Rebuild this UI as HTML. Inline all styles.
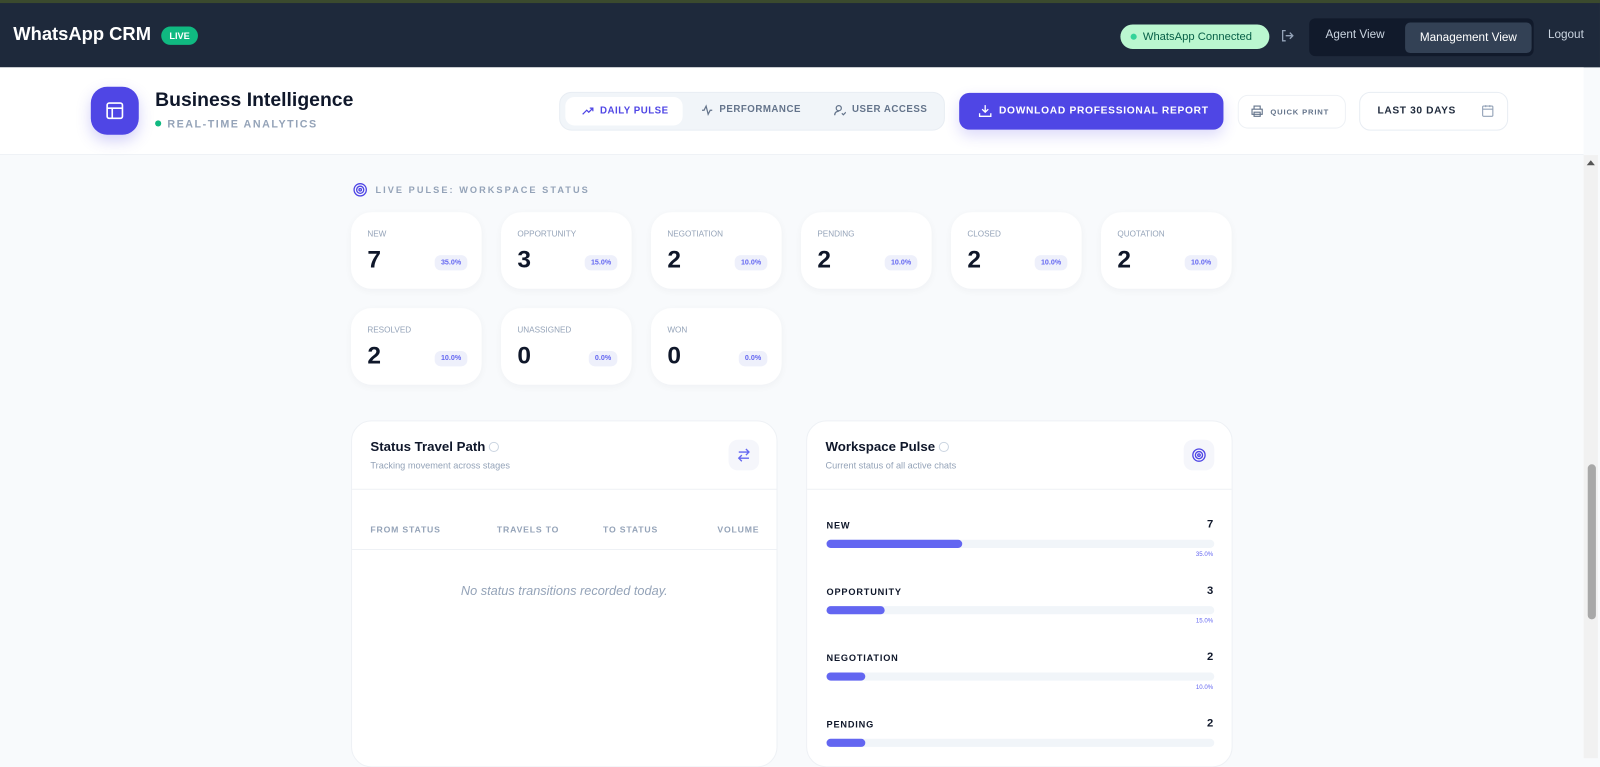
<!DOCTYPE html>
<html><head><style>
*{box-sizing:border-box;margin:0;padding:0}
body{width:1600px;height:743px;overflow:hidden;background:#f8fafc;font-family:"Liberation Sans",sans-serif;position:relative;color:#0f172a}
#w{position:absolute;left:0;top:0;width:1568px;height:728px;transform:scale(1.0204);transform-origin:0 0}
.abs{position:absolute}
.top{left:0;top:0;width:1568px;height:66px;background:#1e293b;border-top:3px solid #3b4a2e}
.hdr{left:0;top:66px;width:1552px;height:86px;background:#fff;border-bottom:1px solid #eef1f5}
.card{position:absolute;width:128px;height:75px;background:#fff;border-radius:20px;box-shadow:0 2px 8px rgba(15,23,42,.04)}
.card .l{position:absolute;left:16px;top:17px;font-size:8px;color:#94a3b8}
.card .n{position:absolute;left:16px;top:33px;font-size:24px;font-weight:bold}
.card .p{position:absolute;right:14px;top:42px;font-size:7px;color:#6366f1;background:#eef0fb;border-radius:6px;padding:4px 6px;font-weight:bold}
.panel{position:absolute;top:412px;width:418px;height:340px;background:#fff;border-radius:20px;border:1px solid #eef1f5}
.ptitle{position:absolute;left:18px;top:17px;font-size:13px;font-weight:bold}
.psub{position:absolute;left:18px;top:38px;font-size:9px;color:#94a3b8}
.th{position:absolute;top:101px;font-size:8.5px;font-weight:bold;color:#94a3b8;letter-spacing:.8px}
.bl{position:absolute;left:19px;font-size:9px;font-weight:bold;letter-spacing:.8px}
.bv{position:absolute;right:18px;font-size:11px;font-weight:bold}
.bar{position:absolute;left:19px;width:380px;height:8px;background:#f1f5f9;border-radius:4px}
.bar i{display:block;height:8px;background:#6366f1;border-radius:4px}
.bp{position:absolute;right:18px;font-size:6px;color:#6366f1}
</style></head><body><div id="w">
<div class="abs top">
 <div class="abs" style="left:13px;top:20px;color:#fff;font-size:18px;font-weight:bold">WhatsApp CRM</div>
 <div class="abs" style="left:158px;top:23px;background:#10b981;color:#fff;font-size:9px;font-weight:bold;border-radius:9px;padding:4px 8px">LIVE</div>
 <div class="abs" style="left:1098px;top:21px;width:146px;height:24px;background:#bbf7d0;border-radius:12px;color:#065f46;font-size:11px;line-height:24px;padding-left:22px">WhatsApp Connected<span class="abs" style="left:10px;top:9px;width:6px;height:6px;border-radius:50%;background:#34d399"></span></div>
 <svg class="abs" style="left:1254px;top:25px" width="14" height="14" viewBox="0 0 14 14" fill="none" stroke="#94a3b8" stroke-width="1.3"><path d="M6 2H3v10h3M6 7h7M10 4l3 3-3 3"/></svg>
 <div class="abs" style="left:1283px;top:15px;width:220px;height:37px;background:#111a2b;border-radius:6px"></div>
 <div class="abs" style="left:1299px;top:25px;color:#cbd5e1;font-size:11.5px">Agent View</div>
 <div class="abs" style="left:1377px;top:19px;width:124px;height:30px;background:#334155;border-radius:5px;color:#fff;font-size:11.5px;line-height:30px;text-align:center">Management View</div>
 <div class="abs" style="left:1517px;top:25px;color:#cbd5e1;font-size:11.5px">Logout</div>
</div>
<div class="abs hdr">
 <div class="abs" style="left:89px;top:19px;width:47px;height:47px;border-radius:16px;background:#4f46e5;box-shadow:0 6px 14px rgba(79,70,229,.25)"><svg class="abs" style="left:14px;top:14px" width="19" height="19" viewBox="0 0 19 19" fill="none" stroke="#fff" stroke-width="1.6"><rect x="2" y="2" width="15" height="15" rx="2"/><path d="M2 7h15M7 7v10"/></svg></div>
 <div class="abs" style="left:152px;top:22px;font-size:19px;font-weight:bold">Business Intelligence</div>
 <div class="abs" style="left:152px;top:50px;font-size:10.5px;color:#94a3b8;letter-spacing:1.5px;font-weight:bold"><span style="display:inline-block;width:6px;height:6px;border-radius:50%;background:#10b981;margin-right:6px;vertical-align:1px"></span>REAL-TIME ANALYTICS</div>
 <div class="abs" style="left:548px;top:24px;width:378px;height:38px;background:#f1f5f9;border-radius:12px;border:1px solid #e8edf3"></div>
 <div class="abs" style="left:554px;top:29px;width:115px;height:28px;background:#fff;border-radius:9px;color:#4f46e5;font-size:9.5px;font-weight:bold;line-height:28px;padding-left:34px;letter-spacing:.5px">DAILY PULSE</div>
 <svg class="abs" style="left:570px;top:38px" width="12" height="10" viewBox="0 0 12 10" fill="none" stroke="#4f46e5" stroke-width="1.2"><path d="M1 8l4-4 2 2 4-4M8 2h3v3"/></svg>
 <svg class="abs" style="left:687px;top:36px" width="12" height="12" viewBox="0 0 12 12" fill="none" stroke="#64748b" stroke-width="1.2"><path d="M1 6h2l2-4 2 8 2-4h2"/></svg>
 <div class="abs" style="left:705px;top:36px;font-size:9.5px;font-weight:bold;color:#64748b;letter-spacing:.5px">PERFORMANCE</div>
 <svg class="abs" style="left:817px;top:36px" width="12" height="12" viewBox="0 0 12 12" fill="none" stroke="#64748b" stroke-width="1.2"><circle cx="5" cy="4" r="2.5"/><path d="M1 11c0-3 2-4 4-4M8 9l1.5 1.5L12 8"/></svg>
 <div class="abs" style="left:835px;top:36px;font-size:9.5px;font-weight:bold;color:#64748b;letter-spacing:.5px">USER ACCESS</div>
 <div class="abs" style="left:940px;top:25px;width:259px;height:36px;background:#4f46e5;border-radius:10px;color:#fff;font-size:10px;font-weight:bold;line-height:36px;padding-left:39px;letter-spacing:.7px;box-shadow:0 6px 14px rgba(79,70,229,.2)">DOWNLOAD PROFESSIONAL REPORT</div>
 <svg class="abs" style="left:959px;top:36px" width="13" height="13" viewBox="0 0 13 13" fill="none" stroke="#fff" stroke-width="1.3"><path d="M6.5 1v7M3.5 5l3 3 3-3M1 9v3h11V9"/></svg>
 <div class="abs" style="left:1213px;top:27px;width:106px;height:33px;background:#fff;border:1px solid #eef1f5;border-radius:10px;font-size:7.5px;font-weight:bold;color:#64748b;line-height:31px;padding-left:31px;letter-spacing:.8px">QUICK PRINT</div>
 <svg class="abs" style="left:1226px;top:37px" width="12" height="12" viewBox="0 0 12 12" fill="none" stroke="#64748b" stroke-width="1.1"><path d="M3 4V1h6v3M1 4h10v5H1zM3 7h6v4H3z"/></svg>
 <div class="abs" style="left:1332px;top:24px;width:146px;height:38px;background:#fff;border:1px solid #e8edf3;border-radius:11px;font-size:10px;font-weight:bold;color:#1e293b;line-height:36px;padding-left:17px;letter-spacing:.6px">LAST 30 DAYS</div>
 <svg class="abs" style="left:1452px;top:36px" width="12" height="13" viewBox="0 0 12 13" fill="none" stroke="#94a3b8" stroke-width="1.1"><rect x="1" y="2" width="10" height="10" rx="1"/><path d="M1 5h10M4 1v2M8 1v2"/></svg>
</div>
<div class="abs" style="left:1552px;top:152px;width:14px;height:591px;background:#f1f1f1"></div>
<div class="abs" style="left:1555px;top:157px;width:0;height:0;border-left:4px solid transparent;border-right:4px solid transparent;border-bottom:5px solid #555"></div>
<div class="abs" style="left:1556px;top:455px;width:8px;height:152px;background:#a8a8a8;border-radius:4px"></div>
<svg class="abs" style="left:346px;top:179px" width="14" height="14" viewBox="0 0 14 14" fill="none" stroke="#4f46e5" stroke-width="1.3"><circle cx="7" cy="7" r="6"/><circle cx="7" cy="7" r="3.5"/><circle cx="7" cy="7" r="1.2"/></svg>
<div class="abs" style="left:368px;top:181px;font-size:9px;font-weight:bold;color:#94a3b8;letter-spacing:2px">LIVE PULSE: WORKSPACE STATUS</div>
<div class="card" style="left:344px;top:208px"><div class="l">NEW</div><div class="n">7</div><div class="p">35.0%</div></div>
<div class="card" style="left:491px;top:208px"><div class="l">OPPORTUNITY</div><div class="n">3</div><div class="p">15.0%</div></div>
<div class="card" style="left:638px;top:208px"><div class="l">NEGOTIATION</div><div class="n">2</div><div class="p">10.0%</div></div>
<div class="card" style="left:785px;top:208px"><div class="l">PENDING</div><div class="n">2</div><div class="p">10.0%</div></div>
<div class="card" style="left:932px;top:208px"><div class="l">CLOSED</div><div class="n">2</div><div class="p">10.0%</div></div>
<div class="card" style="left:1079px;top:208px"><div class="l">QUOTATION</div><div class="n">2</div><div class="p">10.0%</div></div>
<div class="card" style="left:344px;top:302px"><div class="l">RESOLVED</div><div class="n">2</div><div class="p">10.0%</div></div>
<div class="card" style="left:491px;top:302px"><div class="l">UNASSIGNED</div><div class="n">0</div><div class="p">0.0%</div></div>
<div class="card" style="left:638px;top:302px"><div class="l">WON</div><div class="n">0</div><div class="p">0.0%</div></div>
<div class="panel" style="left:344px">
 <div class="ptitle">Status Travel Path <span style="display:inline-block;width:10px;height:10px;border:1px solid #cbd5e1;border-radius:50%;vertical-align:-1px"></span></div>
 <div class="psub">Tracking movement across stages</div>
 <div class="abs" style="left:369px;top:18px;width:30px;height:30px;background:#f5f6fb;border-radius:9px"><svg class="abs" style="left:8px;top:8px" width="14" height="14" viewBox="0 0 14 14" fill="none" stroke="#6366f1" stroke-width="1.3"><path d="M2 4h10M9 1l3 3-3 3M12 10H2M5 7l-3 3 3 3"/></svg></div>
 <div class="abs" style="left:0;top:66px;width:416px;border-top:1px solid #eef1f5"></div>
 <div class="th" style="left:18px">FROM STATUS</div><div class="th" style="left:142px">TRAVELS TO</div><div class="th" style="left:246px">TO STATUS</div><div class="th" style="left:358px">VOLUME</div>
 <div class="abs" style="left:0;top:125px;width:416px;border-top:1px solid #eef1f5"></div>
 <div class="abs" style="left:0;top:159px;width:416px;text-align:center;font-size:12.5px;font-style:italic;color:#94a3b8">No status transitions recorded today.</div>
</div>
<div class="panel" style="left:790px">
 <div class="ptitle">Workspace Pulse <span style="display:inline-block;width:10px;height:10px;border:1px solid #cbd5e1;border-radius:50%;vertical-align:-1px"></span></div>
 <div class="psub">Current status of all active chats</div>
 <div class="abs" style="left:369px;top:18px;width:30px;height:30px;background:#f5f6fb;border-radius:9px"><svg class="abs" style="left:8px;top:8px" width="14" height="14" viewBox="0 0 14 14" fill="none" stroke="#4f46e5" stroke-width="1.3"><circle cx="7" cy="7" r="6"/><circle cx="7" cy="7" r="3.5"/><circle cx="7" cy="7" r="1.2"/></svg></div>
 <div class="abs" style="left:0;top:66px;width:416px;border-top:1px solid #eef1f5"></div>
 <div class="bl" style="top:97px">NEW</div><div class="bv" style="top:95px">7</div><div class="bar" style="top:116px"><i style="width:133px"></i></div><div class="bp" style="top:128px">35.0%</div>
 <div class="bl" style="top:162px">OPPORTUNITY</div><div class="bv" style="top:160px">3</div><div class="bar" style="top:181px"><i style="width:57px"></i></div><div class="bp" style="top:193px">15.0%</div>
 <div class="bl" style="top:227px">NEGOTIATION</div><div class="bv" style="top:225px">2</div><div class="bar" style="top:246px"><i style="width:38px"></i></div><div class="bp" style="top:258px">10.0%</div>
 <div class="bl" style="top:292px">PENDING</div><div class="bv" style="top:290px">2</div><div class="bar" style="top:311px"><i style="width:38px"></i></div>
</div>
</div></body></html>
